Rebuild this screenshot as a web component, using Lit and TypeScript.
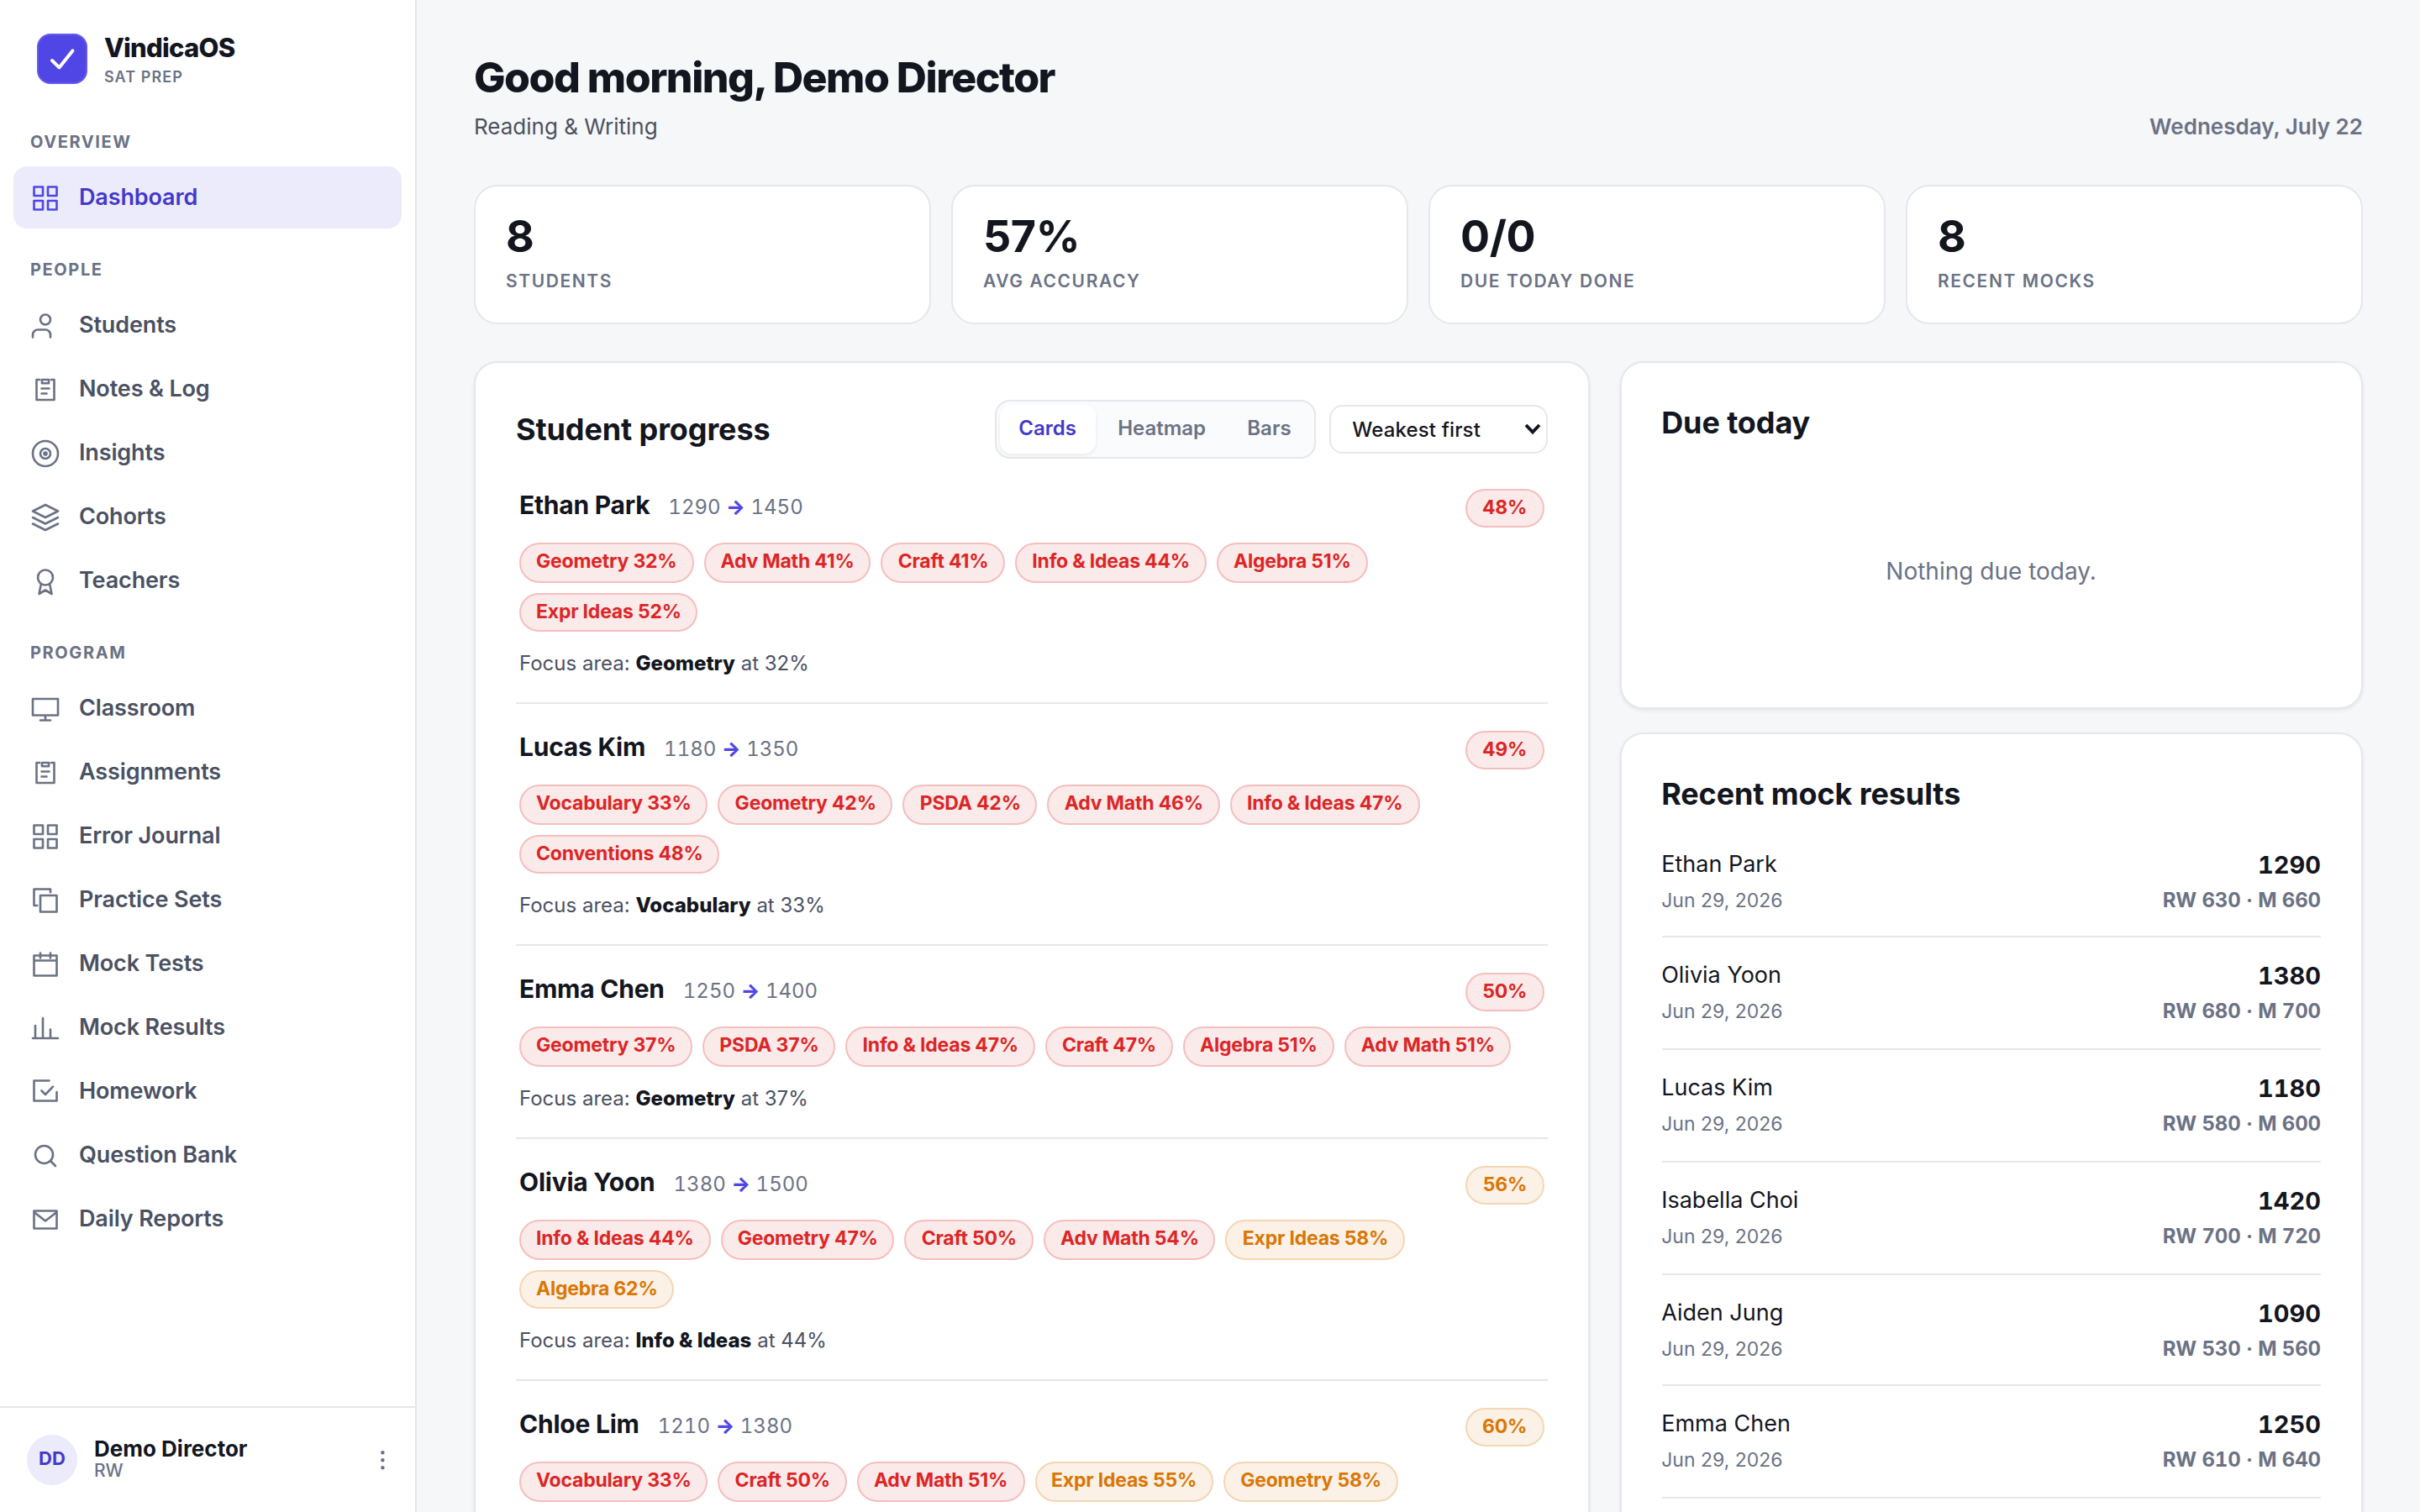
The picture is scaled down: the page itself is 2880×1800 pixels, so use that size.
import { LitElement, html, css, svg } from "lit";
import { customElement, property, state } from "lit/decorators.js";
import { classMap } from "lit/directives/class-map.js";

type Tone = "low" | "mid";

interface Skill {
  name: string;
  pct: number;
}

interface Student {
  name: string;
  from: number;
  to: number;
  accuracy: number;
  skills: Skill[];
}

const ICONS: Record<string, unknown> = {
  grid: svg`<path d="M3 3h7v7H3zM14 3h7v7h-7zM3 14h7v7H3zM14 14h7v7h-7z" />`,
  user: svg`<path d="M16 21v-2a4 4 0 0 0-4-4H6a4 4 0 0 0-4 4v2" /><circle cx="12" cy="7" r="4" />`,
  clipboard: svg`<path d="M7.4 4H5v16h14V4h-2.4M9.3 4h5.4v2.8H9.3zM9 11h6M9 15h4" />`,
  target: svg`<circle cx="12" cy="12" r="10" /><circle cx="12" cy="12" r="4" /><circle cx="12" cy="12" r="1" />`,
  layers: svg`<path d="M12 2L2 7l10 5 10-5zM2 12l10 5 10-5M2 17l10 5 10-5" />`,
  award: svg`<circle cx="12" cy="9" r="6" /><path d="M8.5 14.5L7 22l5-3 5 3-1.5-7.5" />`,
  monitor: svg`<path d="M2 4h20v13H2zM12 17v4M8 21h8" />`,
  copy: svg`<path d="M8 8h13v13H8zM16 5.5V3H3v13h2.5" />`,
  calendar: svg`<path d="M3 5h18v16H3zM3 9h18M8 3v4M16 3v4" />`,
  chart: svg`<path d="M2 20h20M4 20V10M10 20V4M16 20v-7" />`,
  check: svg`<path d="M9 11l3 3 6-6.3M15 3H3v16h18v-7" />`,
  search: svg`<circle cx="11" cy="11" r="7" /><path d="M20 20l-4-4" />`,
  mail: svg`<path d="M3 5h18v14H3zM3 6l9 7 9-7" />`,
};

const NAV = [
  { title: "Overview", items: [["Dashboard", "grid"]] },
  {
    title: "People",
    items: [
      ["Students", "user"],
      ["Notes & Log", "clipboard"],
      ["Insights", "target"],
      ["Cohorts", "layers"],
      ["Teachers", "award"],
    ],
  },
  {
    title: "Program",
    items: [
      ["Classroom", "monitor"],
      ["Assignments", "clipboard"],
      ["Error Journal", "grid"],
      ["Practice Sets", "copy"],
      ["Mock Tests", "calendar"],
      ["Mock Results", "chart"],
      ["Homework", "check"],
      ["Question Bank", "search"],
      ["Daily Reports", "mail"],
    ],
  },
];

const STATS = [
  ["8", "Students"],
  ["57%", "Avg accuracy"],
  ["0/0", "Due today done"],
  ["8", "Recent mocks"],
];

const skills = (...pairs: [string, number][]): Skill[] =>
  pairs.map(([name, pct]) => ({ name, pct }));

const STUDENTS: Student[] = [
  {
    name: "Ethan Park",
    from: 1290,
    to: 1450,
    accuracy: 48,
    skills: skills(["Geometry", 32], ["Adv Math", 41], ["Craft", 41], ["Info & Ideas", 44], ["Algebra", 51], ["Expr Ideas", 52]),
  },
  {
    name: "Lucas Kim",
    from: 1180,
    to: 1350,
    accuracy: 49,
    skills: skills(["Vocabulary", 33], ["Geometry", 42], ["PSDA", 42], ["Adv Math", 46], ["Info & Ideas", 47], ["Conventions", 48]),
  },
  {
    name: "Emma Chen",
    from: 1250,
    to: 1400,
    accuracy: 50,
    skills: skills(["Geometry", 37], ["PSDA", 37], ["Info & Ideas", 47], ["Craft", 47], ["Algebra", 51], ["Adv Math", 51]),
  },
  {
    name: "Olivia Yoon",
    from: 1380,
    to: 1500,
    accuracy: 56,
    skills: skills(["Info & Ideas", 44], ["Geometry", 47], ["Craft", 50], ["Adv Math", 54], ["Expr Ideas", 58], ["Algebra", 62]),
  },
  {
    name: "Chloe Lim",
    from: 1210,
    to: 1380,
    accuracy: 60,
    skills: skills(["Vocabulary", 33], ["Craft", 50], ["Adv Math", 51], ["Expr Ideas", 55], ["Geometry", 58], ["Conventions", 60]),
  },
];

const MOCKS: [string, number, number, number][] = [
  ["Ethan Park", 1290, 630, 660],
  ["Olivia Yoon", 1380, 680, 700],
  ["Lucas Kim", 1180, 580, 600],
  ["Isabella Choi", 1420, 700, 720],
  ["Aiden Jung", 1090, 530, 560],
  ["Emma Chen", 1250, 610, 640],
];

const tone = (pct: number): Tone => (pct < 55 ? "low" : "mid");

@customElement("app-sidebar")
class AppSidebar extends LitElement {
  @property() active = "Dashboard";

  static styles = css`
    :host {
      display: flex;
      flex-direction: column;
      box-sizing: border-box;
      background: #fff;
      border-right: 1px solid #e6e7ec;
    }

    .brand {
      display: flex;
      gap: 10px;
      height: 30px;
      padding: 20px 22px 11px;
    }

    .logo {
      width: 30px;
      height: 30px;
      border-radius: 8px;
      background: #4f46e5;
      box-shadow: inset 0 0 0 1px rgba(255, 255, 255, 0.12);
    }

    .logo svg {
      display: block;
      fill: none;
      stroke: #fff;
      stroke-width: 2;
      stroke-linecap: round;
      stroke-linejoin: round;
    }

    .brand-name {
      margin-top: -1px;
      font-size: 15.5px;
      font-weight: 800;
      line-height: 19px;
      letter-spacing: -0.025em;
    }

    .brand-sub {
      font-size: 9px;
      font-weight: 600;
      line-height: 14px;
      margin-top: 1px;
      letter-spacing: 0.06em;
      color: #6b7285;
    }

    .nav {
      flex: 1;
      padding: 0 8px;
    }

    .section {
      padding: 16px 10px 7px;
      font-size: 10px;
      font-weight: 700;
      line-height: 15px;
      letter-spacing: 0.08em;
      text-transform: uppercase;
      color: #6b7285;
    }

    .item {
      display: flex;
      align-items: center;
      gap: 11px;
      height: 37px;
      margin-bottom: 1px;
      padding: 0 10px;
      border-radius: 8px;
      font-size: 13.5px;
      font-weight: 600;
      letter-spacing: -0.005em;
      color: #4a5163;
    }

    .item svg {
      width: 18px;
      height: 18px;
      fill: none;
      stroke: #6b7285;
      stroke-width: 1.75;
      stroke-linecap: round;
      stroke-linejoin: round;
    }

    .item.active {
      background: #ecebfb;
      color: #4338ca;
    }

    .item.active svg {
      stroke: #4f46e5;
    }

    .user {
      display: flex;
      align-items: center;
      gap: 10px;
      padding: 16px 16px;
      border-top: 1px solid #e6e7ec;
    }

    .avatar {
      display: grid;
      place-items: center;
      box-sizing: border-box;
      width: 30px;
      height: 30px;
      padding-bottom: 1px;
      border-radius: 50%;
      background: #ecebfb;
      color: #4338ca;
      font-size: 11px;
      font-weight: 700;
    }

    .who {
      flex: 1;
      line-height: 1.2;
    }

    .who-name {
      font-size: 13px;
      font-weight: 700;
    }

    .who-role {
      margin: -1px 0 1px;
      font-size: 10.5px;
      line-height: 12px;
      font-weight: 500;
      color: #6b7285;
    }

    .kebab {
      width: 16px;
      height: 16px;
      fill: #6b7285;
    }
  `;

  private select(label: string) {
    this.active = label;
  }

  render() {
    return html`
      <div class="brand">
        <div class="logo">
          <svg viewBox="0 0 30 30" width="30" height="30"><path d="M9 16l4.2 4.2 8-10" /></svg>
        </div>
        <div>
          <div class="brand-name">VindicaOS</div>
          <div class="brand-sub">SAT PREP</div>
        </div>
      </div>
      <nav class="nav">
        ${NAV.map(
          (group) => html`
            <div class="section">${group.title}</div>
            ${group.items.map(
              ([label, icon]) => html`
                <div
                  class=${classMap({ item: true, active: label === this.active })}
                  @click=${() => this.select(label)}
                >
                  <svg viewBox="0 0 24 24">${ICONS[icon]}</svg>
                  <span>${label}</span>
                </div>
              `,
            )}
          `,
        )}
      </nav>
      <div class="user">
        <div class="avatar">DD</div>
        <div class="who">
          <div class="who-name">Demo Director</div>
          <div class="who-role">RW</div>
        </div>
        <svg class="kebab" viewBox="0 0 16 16">
          <circle cx="12.7" cy="3.6" r="1.1" />
          <circle cx="12.7" cy="8.1" r="1.1" />
          <circle cx="12.7" cy="12.6" r="1.1" />
        </svg>
      </div>
    `;
  }
}

@customElement("student-row")
class StudentRow extends LitElement {
  @property({ attribute: false }) student!: Student;

  static styles = css`
    :host {
      display: block;
      padding: 15px 2px 13.25px;
      border-bottom: 1px solid #e6e7ec;
    }

    .head {
      display: flex;
      align-items: baseline;
      height: 23.5px;
      margin-bottom: 9.8px;
    }

    .name {
      font-size: 15px;
      font-weight: 700;
      line-height: 21.75px;
      letter-spacing: -0.008em;
    }

    .scores {
      flex: 1;
      margin-left: 11px;
      font-size: 12px;
      font-variant-numeric: tabular-nums;
      color: #6b7285;
    }

    .arrow {
      font-weight: 800;
      color: #4f46e5;
    }

    .chips {
      display: flex;
      flex-wrap: wrap;
      gap: 6px;
    }

    .chip {
      padding: 2px 9px;
      border: 1px solid;
      border-radius: 999px;
      font-size: 11.5px;
      font-weight: 700;
      line-height: 17.25px;
      letter-spacing: -0.009em;
      white-space: nowrap;
    }

    .low {
      color: #dc2626;
      background: #fbeaea;
      border-color: #f5bebe;
    }

    .mid {
      color: #d97706;
      background: #fbf1e6;
      border-color: #f4d6b4;
    }

    .focus {
      margin-top: 10.3px;
      font-size: 12px;
      line-height: 18.75px;
      color: #4a5163;
    }

    .focus b {
      font-weight: 800;
      color: #14161f;
    }
  `;

  render() {
    const s = this.student;
    const weakest = s.skills[0];
    return html`
      <div class="head">
        <span class="name">${s.name}</span>
        <span class="scores">${s.from} <span class="arrow">→</span> ${s.to}</span>
        <span class="chip ${tone(s.accuracy)}">${s.accuracy}%</span>
      </div>
      <div class="chips">
        ${s.skills.map((k) => html`<span class="chip ${tone(k.pct)}">${k.name} ${k.pct}%</span>`)}
      </div>
      <div class="focus">Focus area: <b>${weakest.name}</b> at ${weakest.pct}%</div>
    `;
  }
}

@customElement("app-root")
class AppRoot extends LitElement {
  @state() private view = "Cards";

  static styles = css`
    :host {
      display: block;
      width: 2880px;
      height: 1800px;
      overflow: hidden;
    }

    /* Laid out on a 1440x900 grid and scaled up to the 2x window. */
    .shell {
      display: grid;
      grid-template-columns: 248px 1fr;
      width: 1440px;
      height: 900px;
      overflow: hidden;
      transform: scale(2);
      transform-origin: 0 0;
      background: #f6f7f9;
      color: #14161f;
      font-family: Inter, "Liberation Sans", sans-serif;
      font-size: 14px;
      line-height: 1.5;
    }

    .main {
      height: 900px;
      box-sizing: border-box;
      padding: 27px 34px 0;
      overflow: hidden;
    }

    .top {
      display: flex;
      justify-content: space-between;
      align-items: flex-end;
      height: 61px;
      margin-bottom: 22px;
    }

    h1 {
      margin: 0;
      font-size: 25px;
      font-weight: 800;
      line-height: 38px;
      letter-spacing: -0.03em;
    }

    .sub {
      margin-top: -1px;
      padding-bottom: 2px;
      font-size: 13px;
      line-height: 22px;
      color: #4a5163;
    }

    .date {
      padding-bottom: 2px;
      font-size: 13px;
      font-weight: 600;
      line-height: 22px;
      color: #6b7285;
    }

    .stats {
      display: grid;
      grid-template-columns: repeat(4, 1fr);
      gap: 12px;
      margin-bottom: 22px;
    }

    .stat {
      box-sizing: border-box;
      height: 83px;
      padding: 15px 18px;
      background: #fff;
      border: 1px solid #e6e7ec;
      border-radius: 14px;
    }

    .stat-value {
      font-size: 26px;
      font-weight: 700;
      line-height: 29px;
      letter-spacing: -0.008em;
    }

    .stat-label {
      margin-top: 5px;
      font-size: 10.5px;
      font-weight: 600;
      line-height: 16px;
      letter-spacing: 0.075em;
      text-transform: uppercase;
      color: #6b7285;
    }

    .columns {
      display: grid;
      grid-template-columns: 1.5fr 1fr;
      gap: 18px;
      align-items: start;
    }

    .side {
      display: grid;
      gap: 14px;
    }

    .card {
      box-sizing: border-box;
      padding: 24px;
      background: #fff;
      border: 1px solid #e6e7ec;
      border-radius: 14px;
      box-shadow: 0 1px 2px rgba(20, 22, 31, 0.08);
    }

    .progress {
      padding-top: 22px;
    }

    h2 {
      margin: 0;
      font-size: 18px;
      font-weight: 700;
      line-height: 24px;
      letter-spacing: -0.003em;
    }

    .progress-head {
      display: flex;
      align-items: center;
      gap: 8px;
      height: 35px;
      margin-bottom: 2px;
    }

    .progress-head h2 {
      flex: 1;
    }

    .seg {
      display: flex;
      gap: 2px;
      padding: 2px;
      background: #fafbfd;
      border: 1px solid #e6e7ec;
      border-radius: 9px;
    }

    .seg button {
      height: 29px;
      padding: 0 11.3px 2px;
      border: 0;
      border-radius: 7px;
      background: none;
      font: 600 12px Inter, sans-serif;
      color: #6b7285;
    }

    .seg button.on {
      background: #fff;
      color: #4338ca;
      box-shadow: 0 1px 2px rgba(20, 22, 31, 0.08);
    }

    .sort {
      display: flex;
      align-items: center;
      justify-content: space-between;
      box-sizing: border-box;
      width: 130px;
      height: 29px;
      padding: 1px 3px 0 13px;
      border: 1px solid #e6e7ec;
      border-radius: 8px;
      font-size: 12px;
      font-weight: 500;
      letter-spacing: 0.006em;
    }

    .sort svg {
      width: 10px;
      height: 7px;
      margin-bottom: 1px;
      fill: none;
      stroke: #14161f;
      stroke-width: 1.9;
    }

    .due {
      height: 207px;
    }

    .empty {
      display: grid;
      place-items: center;
      height: 113px;
      margin-top: 19px;
      color: #6b7285;
    }

    .mocks h2 {
      margin-bottom: 6.7px;
    }

    .mock {
      display: grid;
      grid-template-columns: 1fr auto;
      row-gap: 2px;
      padding: 12px 0;
      border-bottom: 1px solid #e6e7ec;
      font-size: 13.5px;
      line-height: 21px;
    }

    .score {
      text-align: right;
      font-size: 14.5px;
      font-weight: 700;
      font-variant-numeric: tabular-nums;
    }

    .when,
    .split {
      font-size: 11.5px;
      line-height: 18.75px;
      color: #6b7285;
    }

    .split {
      font-size: 12px;
      font-weight: 700;
      text-align: right;
      letter-spacing: -0.005em;
      font-variant-numeric: tabular-nums;
    }
  `;

  render() {
    return html`
      <div class="shell">
        <app-sidebar></app-sidebar>
        <main class="main">
          <header class="top">
            <div>
              <h1>Good morning, Demo Director</h1>
              <div class="sub">Reading &amp; Writing</div>
            </div>
            <div class="date">Wednesday, July 22</div>
          </header>

          <section class="stats">
            ${STATS.map(
              ([value, label]) => html`
                <div class="stat">
                  <div class="stat-value">${value}</div>
                  <div class="stat-label">${label}</div>
                </div>
              `,
            )}
          </section>

          <div class="columns">
            <section class="card progress">
              <div class="progress-head">
                <h2>Student progress</h2>
                <div class="seg">
                  ${["Cards", "Heatmap", "Bars"].map(
                    (v) => html`
                      <button class=${classMap({ on: v === this.view })} @click=${() => (this.view = v)}>${v}</button>
                    `,
                  )}
                </div>
                <div class="sort">
                  <span>Weakest first</span>
                  <svg viewBox="0 0 10 7"><path d="M1 1l4 4.2L9 1" /></svg>
                </div>
              </div>
              ${STUDENTS.map((s) => html`<student-row .student=${s}></student-row>`)}
            </section>

            <div class="side">
              <section class="card due">
                <h2>Due today</h2>
                <div class="empty">Nothing due today.</div>
              </section>
              <section class="card mocks">
                <h2>Recent mock results</h2>
                ${MOCKS.map(
                  ([name, total, rw, math]) => html`
                    <div class="mock">
                      <span>${name}</span>
                      <span class="score">${total}</span>
                      <span class="when">Jun 29, 2026</span>
                      <span class="split">RW ${rw} · M ${math}</span>
                    </div>
                  `,
                )}
              </section>
            </div>
          </div>
        </main>
      </div>
    `;
  }
}
